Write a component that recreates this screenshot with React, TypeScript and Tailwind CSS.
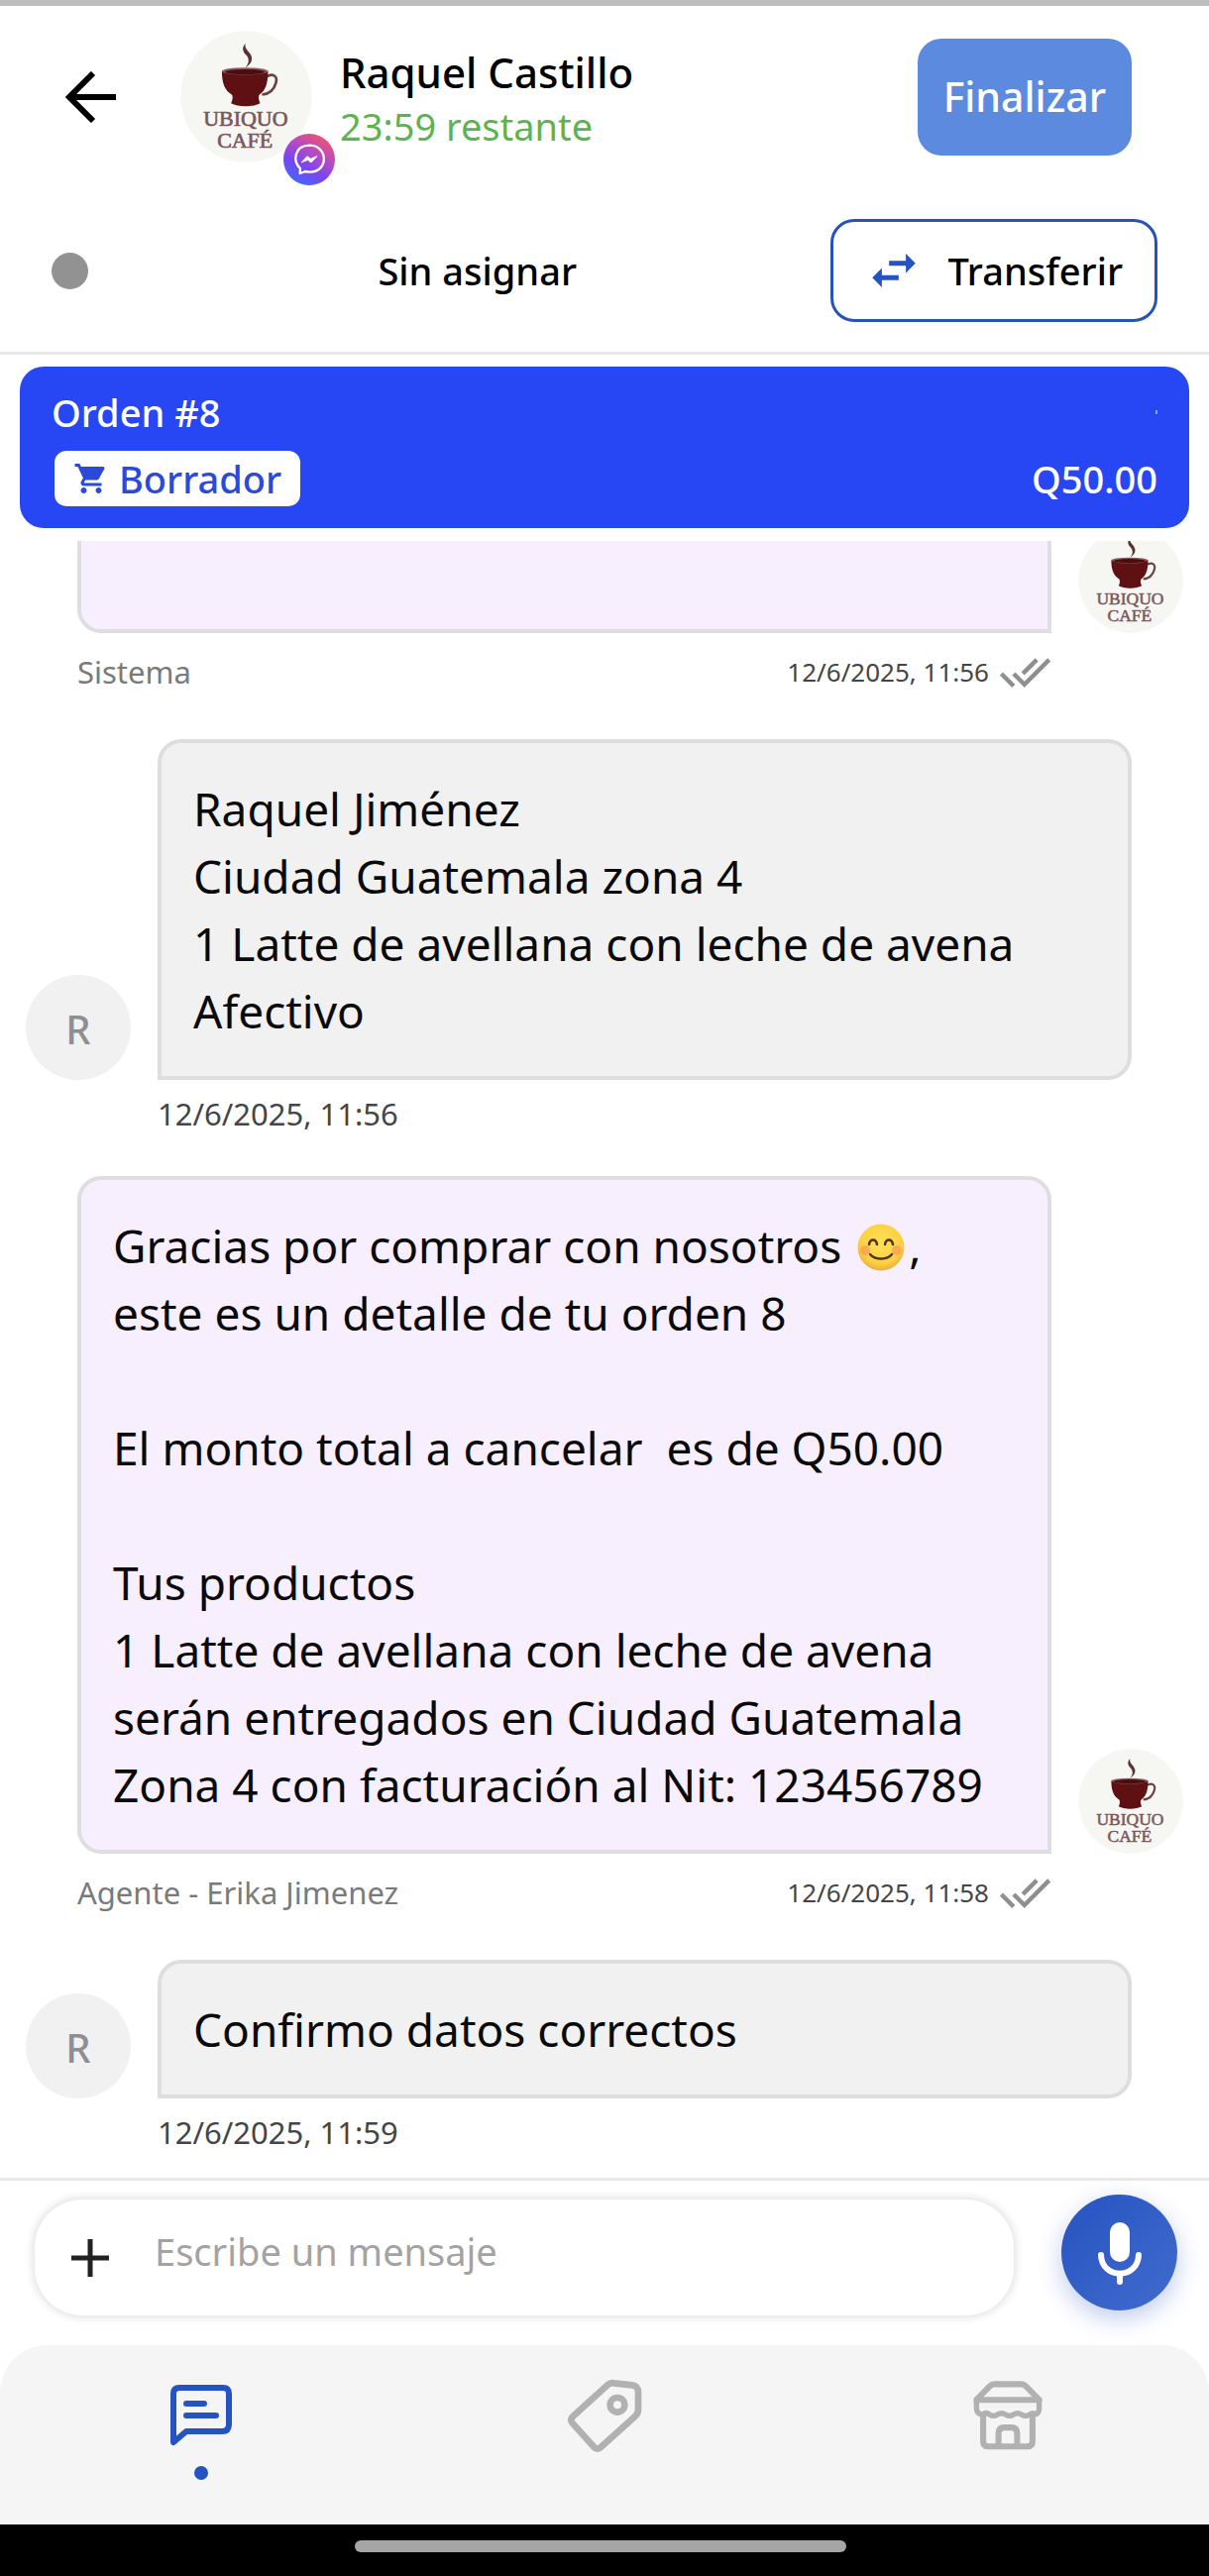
import type { ReactNode } from "react";
import { MdDoneAll, MdShoppingCart, MdSwapHoriz } from "react-icons/md";

function CafeLogo({ className }: { className: string }) {
  return (
    <svg viewBox="0 0 400 400" className={className} role="img" aria-label="Ubiquo Café">
      <circle cx="200" cy="200" r="199" fill="#f6f6f2" />
      <path d="M198 38c-14 14-8 26 4 38 8 12 6 22-4 36 18-12 24-26 14-42-10-14-18-18-14-32z" fill="#5a3034" />
      <path d="M260 140c20-12 36-4 30 18-6 22-22 34-42 36" fill="none" stroke="#6a4044" strokeWidth="8" />
      <path d="M126 122c0 40 10 60 30 72q6 8-2 26c20 12 68 12 88 0q-8-18-2-26c18-12 26-32 26-72z" fill="#5e1013" />
      <ellipse cx="196" cy="123" rx="70" ry="11" fill="#8b5a58" />
      <ellipse cx="196" cy="125" rx="60" ry="8" fill="#4a0c10" />
      <g fill="#7a585b" stroke="#7a585b" strokeWidth="2" fontSize="66" textAnchor="middle" fontFamily="'Liberation Serif', serif">
        <text x="198" y="290">UBIQUO</text>
        <text x="196" y="356">CAFÉ</text>
      </g>
    </svg>
  );
}

function MessengerBadge() {
  return (
    <svg viewBox="0 0 156 156" className="absolute -right-[23px] -bottom-[23px] size-[52px]" role="img" aria-label="Messenger">
      <defs>
        <linearGradient id="messenger" x1="0.25" y1="1" x2="0.8" y2="0.05">
          <stop offset="0" stopColor="#3f6bff" />
          <stop offset="0.35" stopColor="#7a45f0" />
          <stop offset="0.65" stopColor="#b44bc4" />
          <stop offset="1" stopColor="#f2546e" />
        </linearGradient>
      </defs>
      <circle cx="78" cy="78" r="78" fill="url(#messenger)" />
      <path d="M51 105c-23-22-20-69 29-70 55 2 58 78 2 81-7 0-12-1-16-2l-16 6z" fill="none" stroke="#fff" strokeWidth="7" strokeLinejoin="round" />
      <path d="M54 87l18-19 10 8 20-8-18 19-10-8z" fill="#fff" stroke="#fff" strokeWidth="3" strokeLinejoin="round" />
    </svg>
  );
}

function Smile() {
  return (
    <svg viewBox="0 0 48 48" className="mx-1 inline-block size-12 align-[-8px]" role="img" aria-label="😊">
      <defs>
        <radialGradient id="face" cx="0.5" cy="0.4" r="0.6">
          <stop offset="0" stopColor="#fee055" />
          <stop offset="0.75" stopColor="#fbd044" />
          <stop offset="1" stopColor="#ecae3a" />
        </radialGradient>
      </defs>
      <circle cx="24" cy="24" r="23.5" fill="url(#face)" />
      <circle cx="8" cy="27" r="5" fill="#f58b5a" opacity="0.55" />
      <circle cx="40" cy="27" r="5" fill="#f58b5a" opacity="0.55" />
      <g fill="none" stroke="#4f3316" strokeWidth="2.4" strokeLinecap="round">
        <path d="M12 21c1-6 7-6 8 0M28 21c1-6 7-6 8 0" />
        <path d="M13 31c5 6 17 6 22 0" />
      </g>
    </svg>
  );
}

function BackArrow() {
  return (
    <svg viewBox="0 0 52 52" className="size-[52px]" fill="none" stroke="#000" strokeWidth="6" aria-hidden="true">
      <path d="M51 26H5M28 2L4 26l24 24" />
    </svg>
  );
}

function MicIcon() {
  return (
    <svg viewBox="0 0 46 64" className="h-16" aria-hidden="true">
      <rect x="13" y="1" width="20" height="40" rx="10" fill="#fff" />
      <path d="M4 34c1 25 37 25 38 0M23 53v8" fill="none" stroke="#fff" strokeWidth="6" strokeLinecap="round" />
    </svg>
  );
}

function ChatIcon() {
  return (
    <svg viewBox="0 0 64 64" className="size-16" fill="none" stroke="#2553c1" strokeWidth="6" strokeLinecap="round" strokeLinejoin="round" aria-hidden="true">
      <path d="M4 59V10q0-6 6-6H54q6 0 6 6V41q0 7-7 7H17z" />
      <path d="M17 20H35M17 32H47" />
    </svg>
  );
}

function TagIcon() {
  return (
    <svg viewBox="0 0 228 224" className="w-[76px]" fill="none" stroke="#b1b1b1" strokeWidth="20" strokeLinejoin="round" aria-hidden="true">
      <path d="M124 18q8-7 18-5l56 6q18 3 18 22v52q0 12-9 20L102 208q-11 8-20-2L17 134q-9-11 2-21z" />
      <circle cx="153" cy="79" r="22" />
    </svg>
  );
}

function StoreIcon() {
  return (
    <svg viewBox="0 0 208 208" className="w-[70px]" fill="none" stroke="#b1b1b1" strokeWidth="18" strokeLinejoin="round" aria-hidden="true">
      <path d="M10 57L50 16q6-6 14-6h80q8 0 14 6l40 41z" />
      <path d="M10 57v24q0 20 19 20 10-8 20 0 12 8 24 0 12-8 24 0 12 8 24 0 12-8 24 0 12 8 24 0 12-8 14 0 15 0 15-20V57" strokeWidth="16" />
      <path d="M30 103v78q0 16 16 16h116q16 0 16-16v-78" />
      <path d="M76 196v-38q0-18 18-18h20q18 0 18 18v38" />
    </svg>
  );
}

function Bubble({ own, lines = [] }: { own?: boolean; lines?: ReactNode[] }) {
  return (
    <div
      className={
        "min-h-[140px] rounded-3xl border-4 border-[#dedee1] p-8 text-[46px] leading-[68px] whitespace-pre-wrap text-[#0a0a0a] " +
        (own ? "rounded-br-none bg-[#f7effd]" : "rounded-bl-none bg-[#f1f1f1]")
      }
    >
      {lines.map((line, i) => (
        <p key={i} className="min-h-[68px]">
          {line}
        </p>
      ))}
    </div>
  );
}

function Incoming({ time, lines }: { time: string; lines: ReactNode[] }) {
  return (
    <article className="grid grid-cols-[106px_1fr] gap-x-[27px] pr-[78px] pl-[26px]">
      <div className="grid size-[106px] place-items-center self-end rounded-full bg-[#f1f1f1] pt-1 text-[40px] font-medium text-[#8f8f8f]">R</div>
      <Bubble lines={lines} />
      <time className="col-start-2 mt-3 text-[31px] leading-[44px] text-[#454545]">{time}</time>
    </article>
  );
}

function Outgoing({ sender, time, lines }: { sender: string; time: string; lines?: ReactNode[] }) {
  return (
    <article className="grid grid-cols-[1fr_106px] gap-x-[27px] pr-[26px] pl-[78px]">
      <Bubble own lines={lines} />
      <CafeLogo className="size-[106px] self-end" />
      <footer className="mt-3 flex h-[54px] items-center">
        <span className="text-[31px] text-[#7a7a7a]">{sender}</span>
        <time className="ml-auto text-[26px] text-[#454545]">{time}</time>
        <MdDoneAll className="ml-2.5 size-[53px] text-[#8f8f8f]" aria-label="Leído" />
      </footer>
    </article>
  );
}

export default function App() {
  return (
    <div className="flex h-screen flex-col bg-white font-['Noto_Sans',sans-serif] text-black">
      <header className="border-t-[6px] border-b-[3px] border-t-[#bebebe] border-b-[#e9e9e9] pt-[25px] pb-[30px]">
        <div className="flex items-center pr-[78px] pl-[66px]">
          <button aria-label="Volver">
            <BackArrow />
          </button>
          <div className="relative ml-16">
            <CafeLogo className="size-[133px]" />
            <MessengerBadge />
          </div>
          <div className="ml-7 flex-1 pt-1 leading-[54px]">
            <h1 className="text-[42px] font-medium">Raquel Castillo</h1>
            <p className="text-[38px] text-[#5cb450]">23:59 restante</p>
          </div>
          <button className="h-[118px] rounded-3xl bg-[#5b8adf] px-[26px] text-[41px] font-medium text-white">Finalizar</button>
        </div>
        <div className="mt-[57px] flex items-center justify-between px-[52px]">
          <span className="size-[37px] rounded-full bg-[#929292]" />
          <span className="pl-[36px] text-[38px] font-medium">Sin asignar</span>
          <button className="flex h-[104px] items-center rounded-3xl border-[3px] border-[#2553b8] px-8 text-[38px] font-medium">
            <MdSwapHoriz className="mr-[25px] size-[58px] text-[#2553c1]" />
            Transferir
          </button>
        </div>
      </header>

      <section className="mx-5 mt-3 mb-[13px] rounded-3xl bg-[#2747f4] px-8 pt-5 pb-[22px] text-[38px] font-medium text-white">
        <div className="flex h-[52px] items-center justify-between">
          <h2>Orden #8</h2>
          <span className="h-1 w-0.5 bg-white/50" />
        </div>
        <div className="mt-[13px] flex items-center justify-between leading-[56px]">
          <span className="ml-[3px] flex items-center rounded-xl bg-white px-[19px] text-[#2c49d8]">
            <MdShoppingCart className="mr-2.5 size-9" />
            Borrador
          </span>
          <span>Q50.00</span>
        </div>
      </section>

      <main className="flex min-h-0 flex-1 flex-col justify-end gap-[41px] overflow-hidden pb-6">
        <Outgoing sender="Sistema" time="12/6/2025, 11:56" />
        <Incoming
          time="12/6/2025, 11:56"
          lines={["Raquel Jiménez", "Ciudad Guatemala zona 4", "1 Latte de avellana con leche de avena", "Afectivo"]}
        />
        <Outgoing
          sender="Agente - Erika Jimenez"
          time="12/6/2025, 11:58"
          lines={[
            <>
              Gracias por comprar con nosotros <Smile />,
            </>,
            "este es un detalle de tu orden 8",
            "",
            "El monto total a cancelar  es de Q50.00",
            "",
            "Tus productos",
            "1 Latte de avellana con leche de avena",
            "serán entregados en Ciudad Guatemala",
            "Zona 4 con facturación al Nit: 123456789",
          ]}
        />
        <Incoming time="12/6/2025, 11:59" lines={["Confirmo datos correctos"]} />
      </main>

      <form className="flex items-start gap-12 border-t-[3px] border-[#e9e9e9] pt-[14px] pr-8 pb-[30px] pl-[35px]">
        <div className="mt-[5px] flex h-[117px] flex-1 items-center rounded-[48px] bg-white pl-[37px] shadow-[0_0_8px_2px_rgba(0,0,0,0.12)]">
          <button type="button" aria-label="Adjuntar">
            <svg viewBox="0 0 38 38" className="size-[38px]" stroke="#222" strokeWidth="5" aria-hidden="true">
              <path d="M19 0v38M0 19h38" />
            </svg>
          </button>
          <input
            aria-label="Escribe un mensaje"
            placeholder="Escribe un mensaje"
            className="ml-[46px] min-w-0 flex-1 pb-3 text-[38px] outline-none placeholder:text-[#a3a3a3]"
          />
        </div>
        <button
          type="button"
          aria-label="Grabar audio"
          className="grid size-[117px] place-items-center rounded-full bg-linear-to-br from-[#2553c1] to-[#426bcd] shadow-[0_8px_24px_rgba(37,83,193,0.3)]"
        >
          <MicIcon />
        </button>
      </form>

      <nav className="grid h-[181px] grid-cols-3 items-start justify-items-center rounded-t-[48px] bg-[#f5f5f5] pt-[30px]">
        <a href="#chats" aria-label="Chats" className="flex flex-col items-center gap-2.5">
          <span className="grid h-[82px] place-items-center">
            <ChatIcon />
          </span>
          <span className="size-3.5 rounded-full bg-[#2553c1]" />
        </a>
        <a href="#etiquetas" aria-label="Etiquetas" className="grid h-[82px] place-items-center">
          <TagIcon />
        </a>
        <a href="#tienda" aria-label="Tienda" className="grid h-[82px] place-items-center">
          <StoreIcon />
        </a>
      </nav>
      <div className="flex h-[52px] items-center justify-center bg-black pr-2 pb-2">
        <span className="h-3 w-[41%] rounded-full bg-[#a5a5a5]" />
      </div>
    </div>
  );
}
